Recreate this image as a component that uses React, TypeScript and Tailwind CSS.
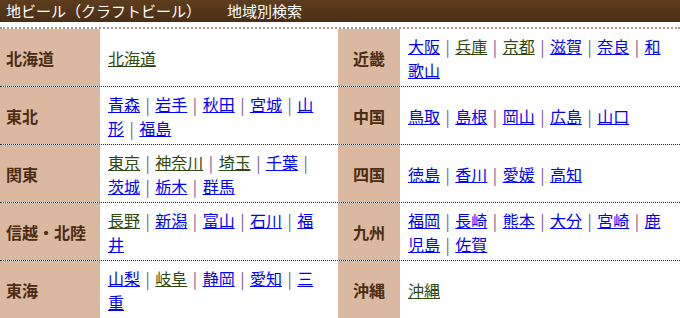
import React from 'react';

type Region = {
    label: string;
    prefs: { name: string; visited?: boolean }[];
};

const rows: [Region, Region][] = [
    [
        { label: '北海道', prefs: [{ name: '北海道', visited: true }] },
        {
            label: '近畿',
            prefs: [
                { name: '大阪' },
                { name: '兵庫', visited: true },
                { name: '京都', visited: true },
                { name: '滋賀' },
                { name: '奈良' },
                { name: '和歌山' },
            ],
        },
    ],
    [
        {
            label: '東北',
            prefs: [{ name: '青森' }, { name: '岩手' }, { name: '秋田' }, { name: '宮城' }, { name: '山形' }, { name: '福島' }],
        },
        {
            label: '中国',
            prefs: [{ name: '鳥取' }, { name: '島根' }, { name: '岡山' }, { name: '広島' }, { name: '山口' }],
        },
    ],
    [
        {
            label: '関東',
            prefs: [
                { name: '東京', visited: true },
                { name: '神奈川', visited: true },
                { name: '埼玉', visited: true },
                { name: '千葉' },
                { name: '茨城' },
                { name: '栃木' },
                { name: '群馬' },
            ],
        },
        {
            label: '四国',
            prefs: [{ name: '徳島' }, { name: '香川' }, { name: '愛媛' }, { name: '高知' }],
        },
    ],
    [
        {
            label: '信越・北陸',
            prefs: [{ name: '長野', visited: true }, { name: '新潟' }, { name: '富山' }, { name: '石川' }, { name: '福井' }],
        },
        {
            label: '九州',
            prefs: [
                { name: '福岡' },
                { name: '長崎' },
                { name: '熊本' },
                { name: '大分' },
                { name: '宮崎' },
                { name: '鹿児島' },
                { name: '佐賀' },
            ],
        },
    ],
    [
        {
            label: '東海',
            prefs: [{ name: '山梨' }, { name: '岐阜', visited: true }, { name: '静岡' }, { name: '愛知' }, { name: '三重' }],
        },
        { label: '沖縄', prefs: [{ name: '沖縄', visited: true }] },
    ],
];

const PrefLinks = ({ prefs }: { prefs: Region['prefs'] }) => (
    <div className="text-[16px] leading-[24px]">
        {prefs.map((p, i) => (
            <React.Fragment key={p.name}>
                {i > 0 && <span className="inline-block w-[15.3px] text-center text-[#7a5a9e]">|</span>}
                <a href="#" className={p.visited ? 'underline text-[#2f4a10]' : 'underline text-[#0000ff]'}>
                    {p.name}
                </a>
            </React.Fragment>
        ))}
    </div>
);

export default function App() {
    return (
        <div className="w-[680px] h-[318px] overflow-hidden bg-white font-['Noto_Sans_CJK_JP',sans-serif]">
            {/* Title bar */}
            <div className="h-[22px] flex items-center pl-[6px] bg-gradient-to-b from-[#5e3d1e] to-[#4a2f15] text-white text-[15px]">
                <span>地ビール（クラフトビール）</span>
                <span className="ml-[26px]">地域別検索</span>
            </div>

            {/* Region table */}
            <div className="mt-[5px] border-t-2 border-dotted border-[#a89a8a]">
                {rows.map(([left, right]) => (
                    <div
                        key={left.label}
                        className="grid grid-cols-[100px_238px_62px_280px] h-[58px] border-b border-dotted border-[#3a3026]"
                    >
                        <div className="flex items-center pl-[6px] bg-[#dbb9a1] text-[#4a2c12] font-bold text-[16px]">
                            {left.label}
                        </div>
                        <div className="flex items-center pl-[8px] pr-[11px]">
                            <PrefLinks prefs={left.prefs} />
                        </div>
                        <div className="flex items-center justify-center bg-[#dbb9a1] text-[#4a2c12] font-bold text-[16px]">
                            {right.label}
                        </div>
                        <div className="flex items-center pl-[8px] pr-[10px]">
                            <PrefLinks prefs={right.prefs} />
                        </div>
                    </div>
                ))}
            </div>
        </div>
    );
}
